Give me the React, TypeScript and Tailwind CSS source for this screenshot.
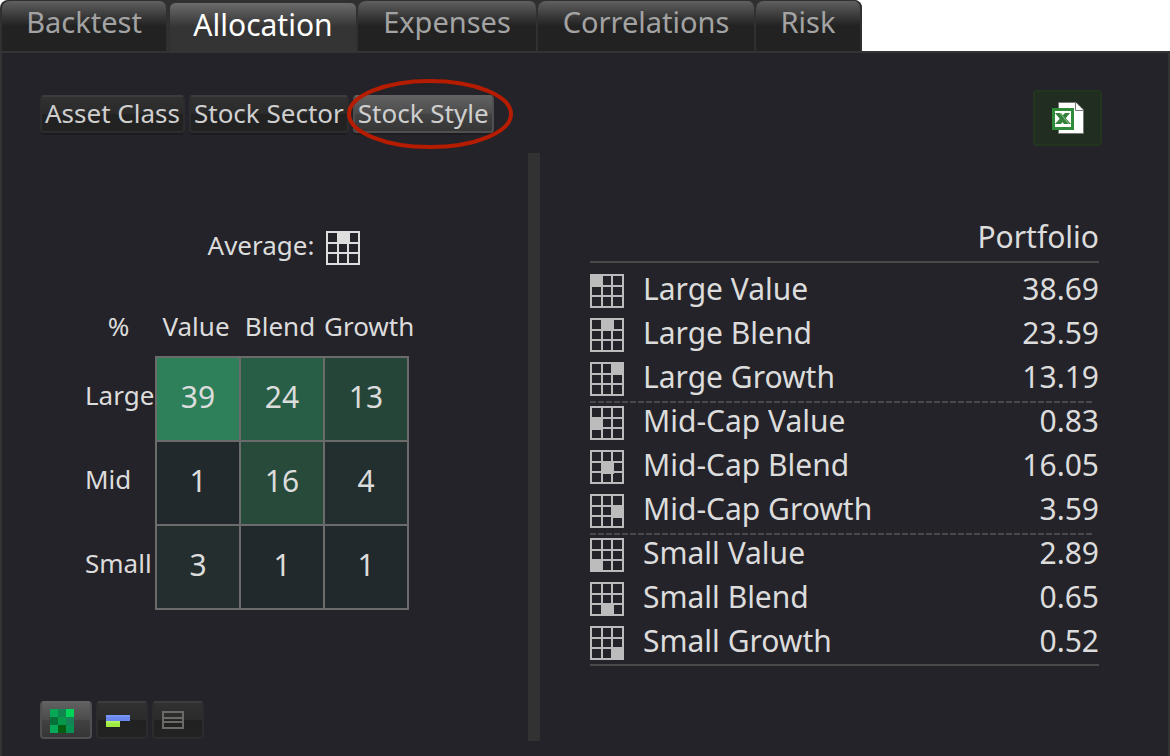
import React, { useState } from 'react';

const tabs = [
  { label: 'Backtest', width: 'w-[166px]' },
  { label: 'Allocation', width: 'w-[190px]' },
  { label: 'Expenses', width: 'w-[180px]' },
  { label: 'Correlations', width: 'w-[218px]' },
  { label: 'Risk', width: 'w-[106px]' },
];

const breakdowns = ['Asset Class', 'Stock Sector', 'Stock Style'];

const matrix = [
  {
    size: 'Large',
    cells: [
      { value: 39, color: 'bg-[#2d805a]' },
      { value: 24, color: 'bg-[#295e46]' },
      { value: 13, color: 'bg-[#264539]' },
    ],
  },
  {
    size: 'Mid',
    cells: [
      { value: 1, color: 'bg-[#22292c]' },
      { value: 16, color: 'bg-[#274a3b]' },
      { value: 4, color: 'bg-[#232f2f]' },
    ],
  },
  {
    size: 'Small',
    cells: [
      { value: 3, color: 'bg-[#242e2e]' },
      { value: 1, color: 'bg-[#22292c]' },
      { value: 1, color: 'bg-[#22292c]' },
    ],
  },
];

const holdings = [
  { name: 'Large Value', value: '38.69' },
  { name: 'Large Blend', value: '23.59' },
  { name: 'Large Growth', value: '13.19' },
  { name: 'Mid-Cap Value', value: '0.83' },
  { name: 'Mid-Cap Blend', value: '16.05' },
  { name: 'Mid-Cap Growth', value: '3.59' },
  { name: 'Small Value', value: '2.89' },
  { name: 'Small Blend', value: '0.65' },
  { name: 'Small Growth', value: '0.52' },
];

// 3x3 style box with one filled cell, counted row by row
function StyleBox({ cell, className }: { cell: number; className: string }) {
  const starts = [0, 11, 21];
  return (
    <svg
      viewBox="0 0 34 34"
      className={`block h-[34px] w-[34px] shrink-0 ${className}`}
      fill="none"
      stroke="currentColor"
      strokeWidth="2"
      shapeRendering="crispEdges"
      aria-hidden="true"
    >
      <rect x="1" y="1" width="32" height="32" />
      <path d="M12 0V34M22 0V34M0 12H34M0 22H34" />
      <rect
        x={starts[cell % 3]}
        y={starts[Math.floor(cell / 3)]}
        width="13"
        height="13"
        fill="currentColor"
        stroke="none"
      />
    </svg>
  );
}

function ExcelIcon() {
  return (
    <svg viewBox="0 0 32 32" className="h-8 w-8" aria-hidden="true">
      <path d="M6.5 .5H24L31.5 8V31.500H6.500Z" fill="#fff" stroke="#777" />
      <path d="M23.500 .5V8.500H31.500" fill="#fff" stroke="#777" />
      <rect x="1.500" y="7.500" width="19" height="19" fill="#fff" stroke="#2f8a3a" strokeWidth="3" />
      <path d="M3 11H9L19 22H12Z" fill="#35803b" />
      <path d="M13 11H18L9 22H3Z" fill="#35803b" />
      <path d="M8 11L17 22" stroke="#8cc48f" strokeWidth="1" />
    </svg>
  );
}

function HeatIcon() {
  const colors = ['#06a855', '#118550', '#00d457', '#06703a', '#059849', '#158355', '#06a957', '#065f10', '#069150'];
  return (
    <svg viewBox="0 0 24 24" className="h-6 w-6" shapeRendering="crispEdges" aria-hidden="true">
      {colors.map((c, i) => (
        <rect key={i} x={(i % 3) * 8} y={Math.floor(i / 3) * 8} width="8" height="8" fill={c} />
      ))}
    </svg>
  );
}

function BarsIcon() {
  return (
    <svg viewBox="0 0 24 24" className="h-6 w-6" shapeRendering="crispEdges" aria-hidden="true">
      <rect y="6" width="24" height="6" fill="#6987ec" />
      <rect y="6" width="24" height="2" fill="#7795f4" />
      <rect y="12" width="14" height="6" fill="#9fe943" />
      <rect y="12" width="14" height="2" fill="#b0f263" />
    </svg>
  );
}

function ListIcon() {
  return (
    <svg viewBox="0 0 24 24" className="h-6 w-6" shapeRendering="crispEdges" aria-hidden="true">
      <path d="M1 2V20M21 2V20M0 3H22M0 9H22M0 13H22M0 19H22" stroke="#6a6a66" strokeWidth="2" />
    </svg>
  );
}

const views = [
  { label: 'Style grid', icon: HeatIcon },
  { label: 'Bar chart', icon: BarsIcon },
  { label: 'Table', icon: ListIcon },
];

const raised = 'border-[#4f4f4f] border-t-[#626262] bg-[linear-gradient(#606060,#4b4b4b_50%,#424242_50%,#363636)]';
const sunken = 'border-[#2c2c2c] border-t-[#3c3c3c] bg-[linear-gradient(#313131,#2a2a2a_50%,#212121_50%,#222222)]';

export default function App() {
  const [tab, setTab] = useState('Allocation');
  const [breakdown, setBreakdown] = useState('Stock Style');
  const [view, setView] = useState('Style grid');

  return (
    <div className="flex min-h-screen flex-col bg-white font-['Noto_Sans',sans-serif] text-[#dcdcdc]">
      <nav className="flex h-[51px] shrink-0">
        <div className="flex rounded-t-lg bg-[#303030] pl-[2px]">
          {tabs.map((t) => (
            <button
              key={t.label}
              type="button"
              onClick={() => setTab(t.label)}
              className={`${t.width} h-[51px] rounded-t-lg border-r-2 border-[#303030] leading-[40px] ${
                tab === t.label
                  ? 'border-l-2 border-t-3 bg-linear-to-b from-[#6c6c6c] to-[#343434] to-50% pb-1 text-[30px] text-white'
                  : 'border-t bg-linear-to-b from-[#606060] to-[#222222] to-50% pb-2 text-[29px] text-[#a3a3a3]'
              }`}
            >
              {t.label}
            </button>
          ))}
        </div>
      </nav>

      <main className="flex grow flex-col border-x-2 border-t-2 border-[#333333] bg-[#242329] pb-[15px]">
        <div className="flex items-start justify-between pl-[38px] pr-[66px] pt-[37px]">
          <div className="flex gap-1 pt-[5px]">
            {breakdowns.map((b) => (
              <div key={b} className="relative">
                <button
                  type="button"
                  onClick={() => setBreakdown(b)}
                  className={`block h-[38px] rounded-[4px] border-2 px-[3px] pb-[2px] text-[26px] leading-[32px] whitespace-nowrap text-[#cfcfcf] shadow-[0_3px_0_-1px_#1d1c21] ${
                    breakdown === b ? raised : sunken
                  }`}
                >
                  {b}
                </button>
                {b === 'Stock Style' && (
                  <svg
                    viewBox="0 0 166 72"
                    className="pointer-events-none absolute -left-[6px] -top-[17px] h-[72px] w-[166px]"
                    fill="none"
                    aria-hidden="true"
                  >
                    <ellipse cx="83" cy="36" rx="81" ry="33" stroke="#b51c00" strokeWidth="4" />
                  </svg>
                )}
              </div>
            ))}
          </div>
          <button
            type="button"
            aria-label="Export to Excel"
            className="flex h-[56px] w-[69px] items-center justify-center rounded-[4px] border-2 border-[#22351f] bg-[#212d21]"
          >
            <ExcelIcon />
          </button>
        </div>

        <div className="mt-[7px] flex grow">
          <section className="flex w-[526px] shrink-0 flex-col pl-[38px]">
            <div className="flex justify-center gap-3 pt-[78px] text-[26px] leading-[28px]">
              Average:
              <StyleBox cell={1} className="text-[#dedede]" />
            </div>

            <table className="mb-auto ml-[45px] mt-[46px] w-[323px] table-fixed border-collapse">
              <colgroup>
                <col className="w-[71px]" />
                <col className="w-[84px]" />
                <col className="w-[84px]" />
                <col className="w-[84px]" />
              </colgroup>
              <thead className="text-[26px] leading-[30px] whitespace-nowrap">
                <tr className="h-[46px] align-top">
                  <th className="p-0 pr-1 font-normal">%</th>
                  <th className="p-0 pr-1 font-normal">Value</th>
                  <th className="p-0 pr-1 font-normal">Blend</th>
                  <th className="p-0 font-normal">Growth</th>
                </tr>
              </thead>
              <tbody>
                {matrix.map((row) => (
                  <tr key={row.size} className="h-[84px]">
                    <th className="p-0 pb-2 text-left text-[26px] leading-[32px] font-normal whitespace-nowrap">
                      {row.size}
                    </th>
                    {row.cells.map((c, i) => (
                      <td
                        key={i}
                        className={`border-2 border-[#6b6b6b] p-0 pb-1 text-center text-[30px] leading-[40px] ${c.color}`}
                      >
                        {c.value}
                      </td>
                    ))}
                  </tr>
                ))}
              </tbody>
            </table>

            <div className="flex gap-1 pb-[2px]">
              {views.map(({ label, icon: Icon }) => (
                <button
                  key={label}
                  type="button"
                  aria-label={label}
                  onClick={() => setView(label)}
                  className={`flex h-[38px] w-[52px] items-center rounded-[4px] border-2 pl-2 pt-[2px] ${
                    view === label ? raised : sunken
                  }`}
                >
                  <Icon />
                </button>
              ))}
            </div>
          </section>

          <div className="w-3 shrink-0 bg-[#323232]" />

          <section className="grow pl-[50px] pr-[69px] pt-[60px]">
            <table className="w-full border-collapse text-[30px] leading-[40px]">
              <thead>
                <tr className="h-[49px] border-b-2 border-[#4a4a4a] align-top">
                  <th colSpan={3} className="p-0 pt-1 text-right font-normal">
                    Portfolio
                  </th>
                </tr>
              </thead>
              <tbody className="border-b-2 border-[#4a4a4a] before:block before:h-[6px]">
                {holdings.map((h, i) => (
                  <tr
                    key={h.name}
                    className={`h-[44px] ${
                      i === 3 || i === 6
                        ? 'bg-[repeating-linear-gradient(90deg,#4a4a4a_0_6px,transparent_6px_8px)] bg-[length:502px_2px] bg-no-repeat'
                        : ''
                    }`}
                  >
                    <td className="w-[53px] p-0">
                      <StyleBox cell={i} className="text-[#bcbcbc]" />
                    </td>
                    <td className="p-0 align-top">{h.name}</td>
                    <td className="p-0 text-right align-top">{h.value}</td>
                  </tr>
                ))}
              </tbody>
            </table>
          </section>
        </div>
      </main>
    </div>
  );
}
